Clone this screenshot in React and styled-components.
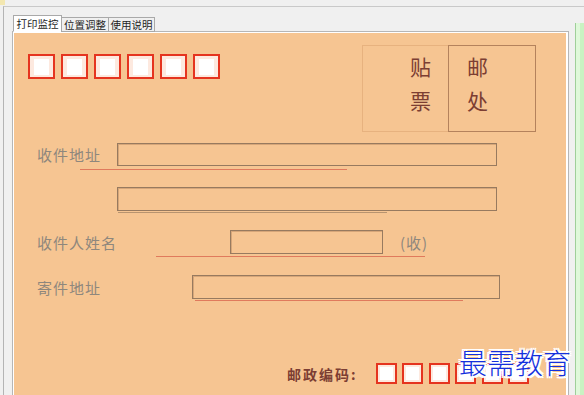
import React from "react";
import styled, { createGlobalStyle } from "styled-components";

const Global = createGlobalStyle`
  html, body { margin: 0; padding: 0; }
  body {
    background: #f0f0f0;
    font-family: "Noto Sans CJK SC", "Noto Sans", sans-serif;
    overflow: hidden;
  }
`;

const ORANGE = "#f6c592";

const Window = styled.div`
  position: relative;
  width: 584px;
  height: 395px;
  overflow: hidden;
  padding-top: 6px;
  box-sizing: border-box;
`;

const Corner = styled.div`
  position: absolute;
  left: 0;
  top: 0;
  width: 5px;
  height: 5px;
  background: #f3e7b0;
`;

const Frame = styled.div`
  margin-left: 3px;
  border-top: 1px solid #c9c9c9;
  border-left: 1px solid #b4b4b4;
  padding: 8px 0 0 8px;
  display: flex;
  align-items: flex-start;
  height: 400px;
  box-sizing: border-box;
`;

const TabControl = styled.div`
  width: 557px;
  flex-shrink: 0;
  display: flex;
  flex-direction: column;
`;

const TabStrip = styled.div`
  display: flex;
  align-items: flex-end;
  height: 17px;
  padding-left: 1px;
  position: relative;
  z-index: 1;
  margin-bottom: -1px;
`;

const Tab = styled.div`
  height: ${(p) => (p.$active ? 17 : 15)}px;
  width: ${(p) => p.$w}px;
  box-sizing: border-box;
  border: 1px solid #a9a9a9;
  border-bottom: ${(p) => (p.$active ? "1px solid #ffffff" : "1px solid #a9a9a9")};
  margin-left: ${(p) => (p.$active ? 0 : -1)}px;
  background: ${(p) => (p.$active ? "#ffffff" : "#f0f0f0")};
  font-size: 10.5px;
  line-height: ${(p) => (p.$active ? 15 : 13)}px;
  color: #1e1e1e;
  text-align: center;
  white-space: nowrap;
`;

const PanelBorder = styled.div`
  border: 1px solid #b6b6b6;
  background: #ffffff;
  padding: 1px 2px 0 1px;
  height: 380px;
  box-sizing: border-box;
`;

const Panel = styled.div`
  background: ${ORANGE};
  height: 100%;
  display: flex;
  flex-direction: column;
`;

const SideGreen = styled.div`
  margin-left: 6px;
  margin-top: 8px;
  width: 12px;
  height: 380px;
  background: #c9f2c2;
  border-left: 1px solid #9fcf9a;
  box-shadow: inset 4px 0 0 #dff8da;
`;

const Header = styled.div`
  display: flex;
  justify-content: space-between;
  align-items: flex-start;
  padding: 12px 30px 0 14px;
`;

const BoxGroup = styled.div`
  display: flex;
  gap: ${(p) => p.$gap}px;
  margin-top: ${(p) => p.$mt || 0}px;
  margin-left: ${(p) => p.$ml || 0}px;
`;

const CodeBox = styled.div`
  width: ${(p) => p.$w}px;
  height: ${(p) => p.$h}px;
  box-sizing: border-box;
  border: 2px solid #e5341f;
  background: #fde9df;
  padding: ${(p) => p.$pad};
  display: flex;
`;

const CodeFill = styled.div`
  flex: 1;
  background: #ffffff;
`;

const Stamp = styled.div`
  display: flex;
  height: 87px;
`;

const StampCell = styled.div`
  width: ${(p) => p.$w}px;
  box-sizing: border-box;
  border: 1px solid ${(p) => (p.$strong ? "#b4825c" : "#e7b27f")};
  ${(p) => (p.$strong ? "" : "border-right: none;")}
  display: flex;
  flex-direction: column;
  align-items: ${(p) => (p.$strong ? "flex-start" : "flex-end")};
  padding: 3px ${(p) => (p.$strong ? 0 : 17)}px 0 ${(p) => (p.$strong ? 18 : 0)}px;
  font-size: 21px;
  line-height: 34px;
  color: #7c3e33;
`;

const Row = styled.div`
  display: flex;
  align-items: center;
  margin-top: ${(p) => p.$mt}px;
  padding-left: ${(p) => p.$pl ?? 23}px;
`;

const Label = styled.div`
  width: ${(p) => p.$w}px;
  flex-shrink: 0;
  font-size: 15px;
  letter-spacing: 1px;
  color: #8e877d;
  white-space: nowrap;
`;

const Field = styled.div`
  width: ${(p) => p.$w}px;
  height: ${(p) => p.$h}px;
  box-sizing: border-box;
  border: 1px solid #977a5f;
  box-shadow: inset 1px 1px 0 #d6a679;
  flex-shrink: 0;
`;

const Suffix = styled.div`
  margin-left: 17px;
  font-size: 15px;
  color: #8e877d;
  letter-spacing: 1px;
`;

const Rule = styled.div`
  margin-left: ${(p) => p.$ml}px;
  margin-top: ${(p) => p.$mt}px;
  width: ${(p) => p.$w}px;
  height: 1px;
  background: ${(p) => (p.$red ? "#e07a5c" : "#b8946f")};
`;

const PostRow = styled.div`
  display: flex;
  align-items: center;
  margin-top: 62px;
  padding-left: 273px;
`;

const PostLabel = styled.div`
  font-size: 14px;
  font-weight: 700;
  letter-spacing: 2px;
  color: #7c3e33;
  white-space: nowrap;
`;

const Watermark = styled.div`
  position: absolute;
  left: 459px;
  top: 342px;
  font-size: 28px;
  font-weight: 300;
  color: #1430dd;
  font-family: "Noto Sans CJK SC", sans-serif;
  text-shadow:
    2px 0 0 #fff, -2px 0 0 #fff, 0 2px 0 #fff, 0 -2px 0 #fff,
    2px 2px 0 #fff, -2px -2px 0 #fff, 2px -2px 0 #fff, -2px 2px 0 #fff;
`;

const tabs = [
  { t: "打印监控", w: 49, active: true },
  { t: "位置调整", w: 48 },
  { t: "使用说明", w: 47 },
];

export default function App() {
  return (
    <>
      <Global />
      <Window>
        <Corner />
        <Frame>
          <TabControl>
            <TabStrip>
              {tabs.map((t) => (
                <Tab key={t.t} $w={t.w} $active={t.active}>
                  {t.t}
                </Tab>
              ))}
            </TabStrip>
            <PanelBorder>
              <Panel>
                <Header>
                  <BoxGroup $gap={6} $mt={9}>
                    {Array.from({ length: 6 }).map((_, i) => (
                      <CodeBox key={i} $w={27} $h={25} $pad="3px 4px 2px 4px">
                        <CodeFill />
                      </CodeBox>
                    ))}
                  </BoxGroup>
                  <Stamp>
                    <StampCell $w={86}>
                      <span>贴</span>
                      <span>票</span>
                    </StampCell>
                    <StampCell $w={88} $strong>
                      <span>邮</span>
                      <span>处</span>
                    </StampCell>
                  </Stamp>
                </Header>

                <Row $mt={11}>
                  <Label $w={80}>收件地址</Label>
                  <Field $w={380} $h={23} />
                </Row>
                <Rule $red $ml={66} $w={267} $mt={3} />

                <Row $mt={17} $pl={103}>
                  <Field $w={380} $h={24} />
                </Row>
                <Rule $ml={104} $w={269} $mt={1} />

                <Row $mt={17}>
                  <Label $w={193}>收件人姓名</Label>
                  <Field $w={153} $h={24} />
                  <Suffix>(收)</Suffix>
                </Row>
                <Rule $red $ml={142} $w={269} $mt={2} />

                <Row $mt={18}>
                  <Label $w={155}>寄件地址</Label>
                  <Field $w={308} $h={24} />
                </Row>
                <Rule $red $ml={181} $w={268} $mt={1} />

                <PostRow>
                  <PostLabel>邮政编码:</PostLabel>
                  <BoxGroup $gap={5.5} $ml={18}>
                    {Array.from({ length: 6 }).map((_, i) => (
                      <CodeBox key={i} $w={21} $h={21} $pad="2px">
                        <CodeFill />
                      </CodeBox>
                    ))}
                  </BoxGroup>
                </PostRow>
              </Panel>
            </PanelBorder>
          </TabControl>
          <SideGreen />
        </Frame>
        <Watermark>最需教育</Watermark>
      </Window>
    </>
  );
}
